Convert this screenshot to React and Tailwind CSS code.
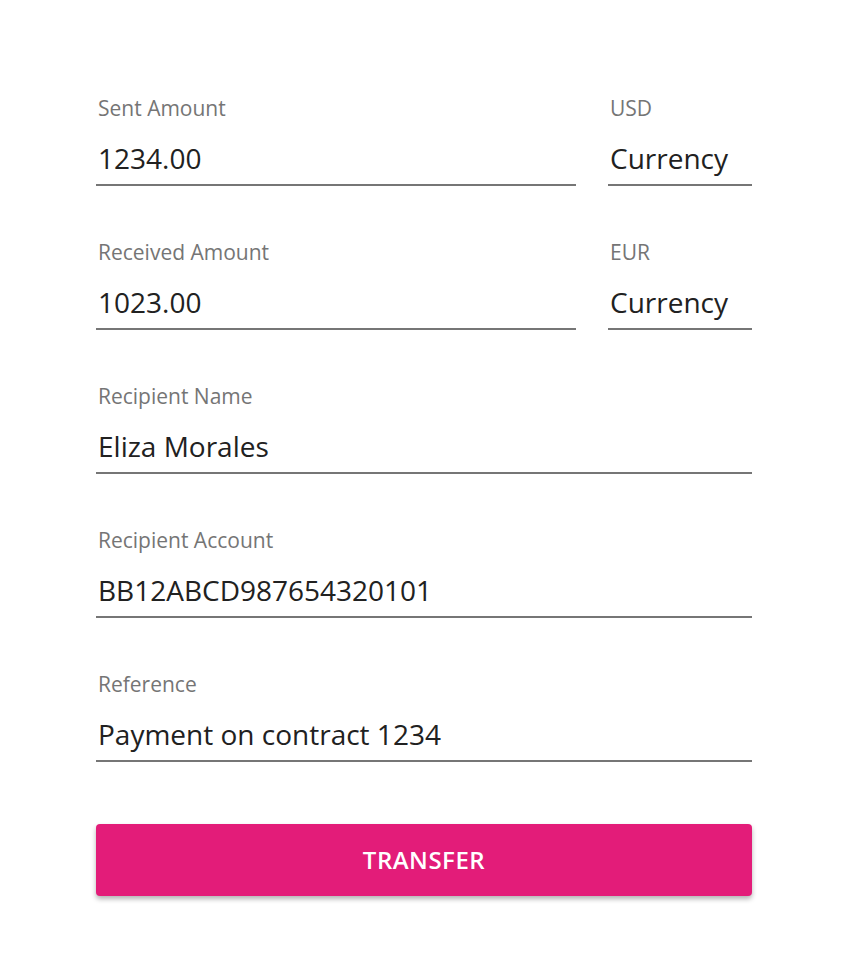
import React from "react";

const Field = ({ label, value, className = "" }) => (
    <div className={`flex flex-col ${className}`}>
        <label className="px-[2px] text-[21px] leading-[24px] text-[#757575]">{label}</label>
        <div className="mt-[20px] border-b-[2px] border-[#767676] px-[2px] pb-[8px] text-[28px] leading-[36px] text-[#212121]">
            {value}
        </div>
    </div>
);

export default function App() {
    return (
        <div className="min-h-screen bg-white" style={{ fontFamily: "'Open Sans', sans-serif" }}>
            <div className="mx-auto flex w-[656px] flex-col pt-[96px]">
                <div className="flex gap-[32px]">
                    <Field label="Sent Amount" value="1234.00" className="flex-1" />
                    <Field label="USD" value="Currency" className="w-[144px]" />
                </div>
                <div className="mt-[54px] flex gap-[32px]">
                    <Field label="Received Amount" value="1023.00" className="flex-1" />
                    <Field label="EUR" value="Currency" className="w-[144px]" />
                </div>
                <Field label="Recipient Name" value="Eliza Morales" className="mt-[54px]" />
                <Field label="Recipient Account" value="BB12ABCD987654320101" className="mt-[54px]" />
                <Field label="Reference" value="Payment on contract 1234" className="mt-[54px]" />
                <button className="mt-[62px] h-[72px] rounded-[4px] bg-[#e31c79] text-[24px] font-semibold tracking-[0.5px] text-white shadow-[0_3px_5px_rgba(0,0,0,0.3)]">
                    TRANSFER
                </button>
            </div>
        </div>
    );
}
